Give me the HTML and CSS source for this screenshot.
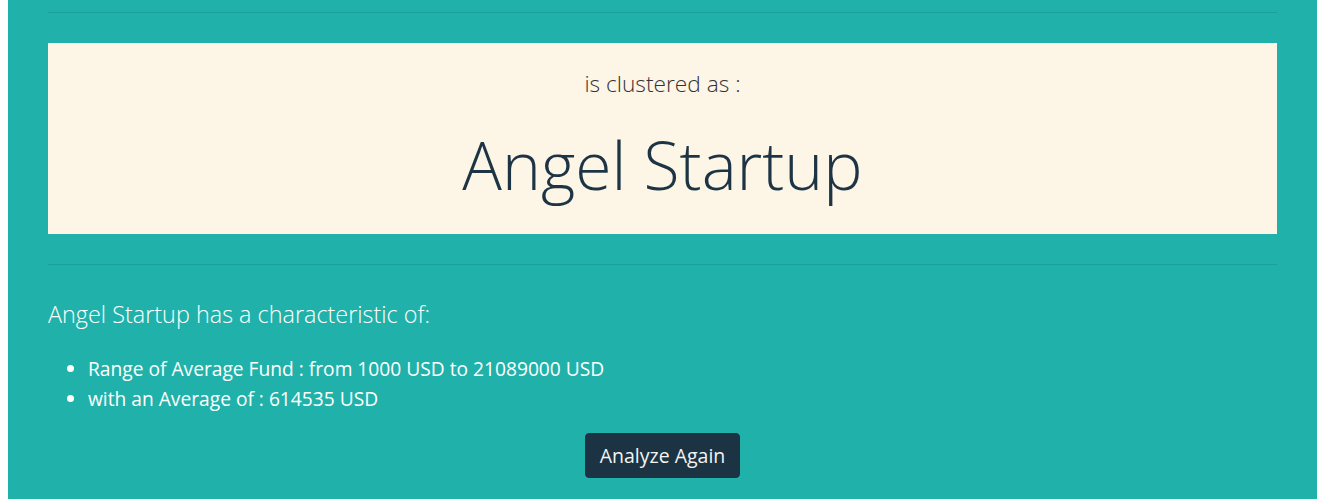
FILE: index.html
```html
<!DOCTYPE html>
<html lang="en">
<head>
<meta charset="utf-8">
<title>Result</title>
<link rel="stylesheet" href="styles.css">
</head>
<body>
<main class="panel">
  <hr class="rule">
  <section class="result">
    <h4 class="result-sub">is clustered as :</h4>
    <h1 class="result-name">Angel Startup</h1>
  </section>
  <hr class="rule rule-low">
  <h4 class="char-title">Angel Startup has a characteristic of:</h4>
  <ul class="char-list">
    <li>Range of Average Fund : from 1000 USD to 21089000 USD</li>
    <li>with an Average of : 614535 USD</li>
  </ul>
  <div class="actions">
    <button class="btn-again" type="button">Analyze Again</button>
  </div>
</main>
</body>
</html>
```
FILE: styles.css
```css
html, body {
  margin: 0;
  padding: 0;
  background: #ffffff;
}
body {
  padding: 0 12px 0 8px;
  font-family: "Open Sans", "Noto Sans", sans-serif;
}
.panel {
  background: #20b2aa;
  padding: 12px 40px 21px;
  min-height: 466px;
}
.rule {
  border: 0;
  border-top: 1px solid rgba(0, 0, 0, 0.1);
  margin: 0;
}
.rule-low {
  margin-top: 30px;
}
.result {
  margin-top: 30px;
  background: #fdf5e6;
  height: 191px;
  box-sizing: border-box;
  padding-top: 26px;
  text-align: center;
  color: #1d3445;
}
.result-sub {
  margin: 0;
  font-size: 22.7px;
  font-weight: 300;
  line-height: 30px;
  color: #333;
}
.result-name {
  margin: 22px 0 0;
  font-size: 66px;
  font-weight: 300;
  line-height: 86px;
  color: #1d3445;
}
.char-title {
  margin: 34px 0 0;
  font-size: 23.4px;
  font-weight: 300;
  line-height: 30px;
  color: #ffffff;
}
.char-list {
  margin: 25px 0 0;
  padding-left: 40px;
  color: #ffffff;
  font-size: 19.2px;
  line-height: 30px;
}
.actions {
  display: flex;
  justify-content: center;
  margin-top: 19px;
}
.btn-again {
  background: #1b3343;
  color: #f4f4f4;
  border: 1px solid #1b3343;
  border-radius: 4px;
  font-family: "Open Sans", "Noto Sans", sans-serif;
  font-size: 19.5px;
  line-height: 27px;
  padding: 8px 10px;
  width: 155px;
  height: 45px;
}
```
